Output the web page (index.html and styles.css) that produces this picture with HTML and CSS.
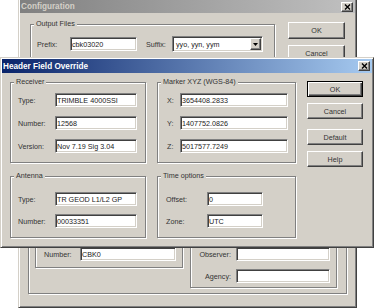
FILE: index.html
```html
<!DOCTYPE html>
<html lang="en">
<head>
  <meta charset="UTF-8">
  <meta name="viewport" content="width=device-width, initial-scale=1.0">
  <title>Header Field Override</title>
  <link rel="stylesheet" href="styles.css">
</head>
<body>
  <!-- background dialog -->
  <div class="win win-back">
    <div class="titlebar inactive">
      <span class="title">Configuration</span>
      <span class="close"><svg width="7" height="6" viewBox="0 0 7 6"><path d="M1 .5l5 5M6 .5l-5 5" stroke="#000" stroke-width="1.4"/></svg></span>
    </div>
    <div class="back-body">
      <div class="back-top">
        <div class="group out-files">
          <span class="caption">Output Files</span>
          <div class="row">
            <label class="lbl w-prefix">Prefix:</label>
            <input class="field w-67" type="text" value="cbk03020">
            <label class="lbl w-suffix">Suffix:</label>
            <div class="combo">
              <span class="combo-text">yyo, yyn, yym</span>
              <span class="combo-btn"><svg width="5" height="3" viewBox="0 0 5 3"><path d="M0 0h5L2.5 3z" fill="#000"/></svg></span>
            </div>
          </div>
        </div>
        <div class="back-btns">
          <button class="btn tall">OK</button>
          <button class="btn tall">Cancel</button>
        </div>
      </div>

      <div class="group big">
        <div class="group sub-left">
          <span class="caption">Marker</span>
          <div class="rows">
            <div class="row"><label class="lbl w-36">Name:</label><input class="field w-96" type="text" value=""></div>
            <div class="row"><label class="lbl w-36">Number:</label><input class="field w-96" type="text" value="CBK0"></div>
          </div>
        </div>
        <div class="group sub-right">
          <span class="caption">Observer</span>
          <div class="rows">
            <div class="row"><label class="lbl rlbl">Run By:</label><input class="field w-94" type="text" value=""></div>
            <div class="row"><label class="lbl rlbl">Observer:</label><input class="field w-94" type="text" value=""></div>
            <div class="row"><label class="lbl rlbl">Agency:</label><input class="field w-94" type="text" value=""></div>
          </div>
        </div>
      </div>
    </div>
  </div>

  <!-- active dialog -->
  <div class="win win-front">
    <div class="titlebar active">
      <span class="title">Header Field Override</span>
      <span class="close"><svg width="7" height="6" viewBox="0 0 7 6"><path d="M1 .5l5 5M6 .5l-5 5" stroke="#000" stroke-width="1.4"/></svg></span>
    </div>
    <div class="front-body">
      <div class="col col-left">
        <div class="group g-tall pad-left">
          <span class="caption">Receiver</span>
          <div class="rows">
            <div class="row"><label class="lbl w-37">Type:</label><input class="field grow" type="text" value="TRIMBLE 4000SSI"></div>
            <div class="row"><label class="lbl w-37">Number:</label><input class="field grow" type="text" value="12568"></div>
            <div class="row"><label class="lbl w-37">Version:</label><input class="field grow" type="text" value="Nov 7.19 Sig 3.04"></div>
          </div>
        </div>
        <div class="group g-short pad-left">
          <span class="caption">Antenna</span>
          <div class="rows narrow">
            <div class="row"><label class="lbl w-37">Type:</label><input class="field grow" type="text" value="TR GEOD L1/L2 GP"></div>
            <div class="row"><label class="lbl w-37">Number:</label><input class="field grow" type="text" value="00033351"></div>
          </div>
        </div>
      </div>

      <div class="col col-mid">
        <div class="group g-tall pad-mid">
          <span class="caption">Marker XYZ (WGS-84)</span>
          <div class="rows">
            <div class="row"><label class="lbl w-13">X:</label><input class="field w-108" type="text" value="3654408.2833"></div>
            <div class="row"><label class="lbl w-13">Y:</label><input class="field w-108" type="text" value="1407752.0826"></div>
            <div class="row"><label class="lbl w-13">Z:</label><input class="field w-108" type="text" value="5017577.7249"></div>
          </div>
        </div>
        <div class="group g-short pad-time">
          <span class="caption">Time options</span>
          <div class="rows narrow">
            <div class="row"><label class="lbl w-41">Offset:</label><input class="field w-56" type="text" value="0"></div>
            <div class="row"><label class="lbl w-41">Zone:</label><input class="field w-56" type="text" value="UTC"></div>
          </div>
        </div>
      </div>

      <div class="btns">
        <button class="btn default">OK</button>
        <button class="btn">Cancel</button>
        <button class="btn sep">Default</button>
        <button class="btn">Help</button>
      </div>
    </div>
  </div>
</body>
</html>
```

FILE: styles.css
```css
* {
  box-sizing: border-box;
  margin: 0;
  padding: 0;
}

html, body {
  width: 374px;
  height: 308px;
  overflow: hidden;
  background: #fff;
}

body {
  position: relative;
  font-family: "Liberation Sans", Arial, sans-serif;
  font-size: 7.2px;
  color: #333;
}

/* windows */
.win {
  position: absolute;
  display: flex;
  flex-direction: column;
  padding: 1px;
  background: #d4d0c8;
  border: 1px solid;
  border-color: #d4d0c8 #404040 #404040 #d4d0c8;
  box-shadow: inset 1px 1px 0 #fff, inset -1px -1px 0 #808080;
}

.win-back {
  left: 18px;
  top: -2px;
  width: 339px;
  height: 310px;
}

.win-front {
  left: 0;
  top: 57px;
  width: 374px;
  height: 191px;
}

.titlebar {
  display: flex;
  align-items: center;
  justify-content: space-between;
  padding: 0 2px 0 1px;
  font-size: 8.2px;
  font-weight: bold;
  white-space: nowrap;
}

.titlebar.active {
  height: 14px;
  color: #fff;
  background: linear-gradient(to right, #0a246a, #a6caf0);
}

.titlebar.inactive {
  height: 13px;
  color: #d4d0c8;
  background: linear-gradient(to right, #808080, #c0c0c0);
}

.close {
  display: flex;
  align-items: center;
  justify-content: center;
  width: 12px;
  height: 10px;
  background: #d4d0c8;
  border: 1px solid;
  border-color: #fff #404040 #404040 #fff;
  box-shadow: inset -1px -1px 0 #808080;
}

/* group boxes */
.group {
  position: relative;
  border: 1px solid #808080;
  box-shadow: inset 1px 1px 0 #fff, 1px 1px 0 #fff;
}

.caption {
  position: absolute;
  top: -6px;
  left: 3px;
  padding: 0 2px;
  line-height: 9px;
  background: #d4d0c8;
  white-space: nowrap;
}

.rows {
  display: flex;
  flex-direction: column;
  gap: 9px;
}

.rows.narrow {
  gap: 8px;
}

.row {
  display: flex;
  align-items: center;
  height: 14px;
}

.lbl {
  flex: none;
  white-space: nowrap;
}

.rlbl {
  width: 41px;
  padding-right: 5px;
  text-align: right;
}

.w-13 { width: 13px; }
.w-36 { width: 36px; }
.w-37 { width: 37px; }
.w-41 { width: 41px; }
.w-prefix { width: 33px; }
.w-suffix { width: 26px; margin-left: 9px; }

/* sunken fields */
.field {
  flex: none;
  height: 14px;
  padding: 0 1px;
  font: inherit;
  color: #222;
  background: #fff;
  border: 1px solid;
  border-color: #808080 #fff #fff #808080;
  box-shadow: inset 1px 1px 0 #404040, inset -1px -1px 0 #d4d0c8;
  outline: none;
}

.field.grow { flex: 1; min-width: 0; }
.w-56 { width: 56px; }
.w-67 { width: 67px; }
.w-94 { width: 94px; }
.w-96 { width: 96px; }
.w-108 { width: 108px; }

.combo {
  display: flex;
  align-items: center;
  width: 91px;
  height: 16px;
  padding: 1px;
  background: #fff;
  border: 1px solid;
  border-color: #808080 #fff #fff #808080;
  box-shadow: inset 1px 1px 0 #404040, inset -1px -1px 0 #d4d0c8;
}

.combo-text {
  flex: 1;
  padding-left: 2px;
  color: #222;
  white-space: nowrap;
}

.combo-btn {
  display: flex;
  align-items: center;
  justify-content: center;
  width: 11px;
  height: 12px;
  background: #d4d0c8;
  border: 1px solid;
  border-color: #fff #404040 #404040 #fff;
  box-shadow: inset -1px -1px 0 #808080;
}

/* buttons */
.btn {
  display: flex;
  align-items: center;
  justify-content: center;
  height: 16px;
  font: inherit;
  color: #333;
  background: #d4d0c8;
  border: 1px solid;
  border-color: #fff #404040 #404040 #fff;
  box-shadow: inset -1px -1px 0 #808080;
}

.btn.tall { height: 17px; }

.btn.default {
  border-color: #000;
  box-shadow: inset 1px 1px 0 #fff, inset -1px -1px 0 #404040, inset -2px -2px 0 #808080;
}

/* front dialog layout */
.front-body {
  display: flex;
  gap: 11px;
  padding: 8px 0 0 8px;
}

.col {
  display: flex;
  flex-direction: column;
  gap: 13px;
  margin-top: 1px;
}

.col-left { width: 136px; }
.col-mid { width: 139px; }

.g-tall { height: 81px; padding-top: 10px; }
.g-short { height: 62px; padding-top: 15px; }

.pad-left { padding-left: 7px; padding-right: 8px; }
.pad-mid { padding-left: 9px; padding-right: 7px; }
.pad-time { padding-left: 8px; }

.btns {
  display: flex;
  flex-direction: column;
  gap: 6px;
  width: 56px;
}

.btns .sep { margin-top: 4px; }

/* background dialog layout */
.back-body {
  display: flex;
  flex-direction: column;
  padding: 0 8px;
}

.back-top {
  display: flex;
  align-items: flex-start;
  margin-top: 9px;
}

.out-files {
  width: 245px;
  margin: 2px 0 0 2px;
  padding: 11px 6px 10px;
}

.out-files .row { height: 16px; }

.back-btns {
  display: flex;
  flex-direction: column;
  gap: 6px;
  width: 57px;
  margin-left: 13px;
}

.big {
  display: flex;
  align-items: flex-start;
  gap: 7px;
  margin-top: 137px;
  padding: 13px 9px 5px 6px;
}

.sub-left {
  width: 148px;
  padding: 10px 6px 6px 8px;
}

.sub-right {
  width: 147px;
  padding: 10px 5px 4px 4px;
}

.big .rows { gap: 8px; }
```
